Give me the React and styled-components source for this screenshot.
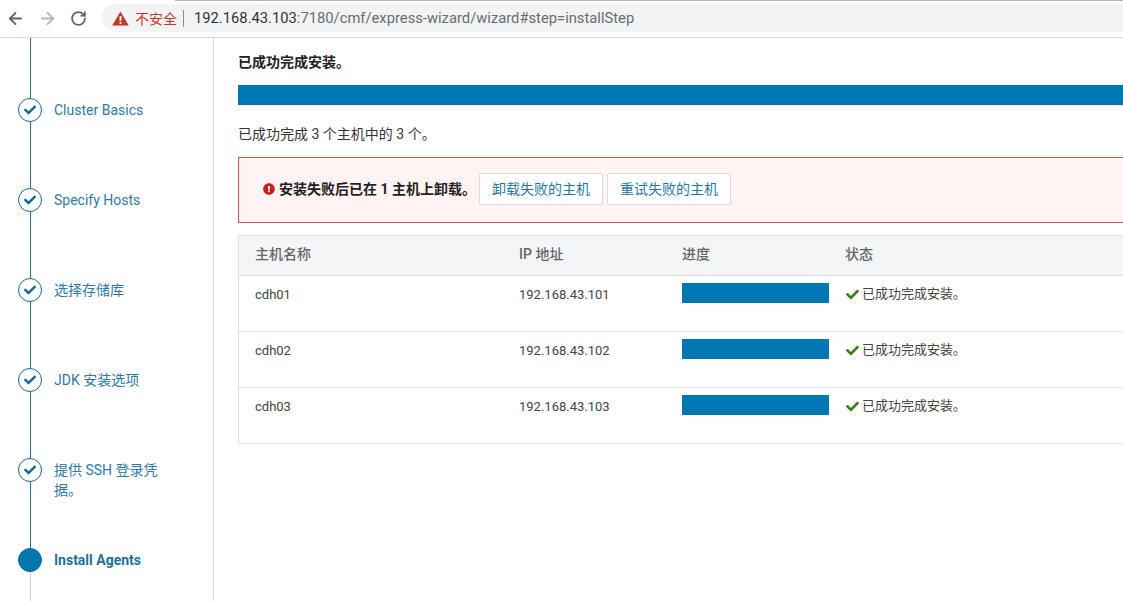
import React from 'react'
import styled, { createGlobalStyle } from 'styled-components'
import { ArrowLeft, ArrowRight, RotateCw } from 'lucide-react'
import { FaCheck, FaExclamationCircle } from 'react-icons/fa'

const BLUE = '#0077b0'

const Global = createGlobalStyle`
  html, body { margin: 0; padding: 0; background: #fff; }
  body {
    font-family: Roboto, "Noto Sans CJK SC", sans-serif;
    font-size: 14px;
    color: #333;
  }
`

const Page = styled.div`
  width: 1123px;
  height: 601px;
  overflow: hidden;
  display: flex;
  flex-direction: column;
`

const Toolbar = styled.div`
  height: 37px;
  flex-shrink: 0;
  border-bottom: 1px solid #d8d8d8;
  display: flex;
  align-items: center;
  padding-left: 6px;
  background: linear-gradient(to right, #fff 175px, #b4b4b4 175px) top / 100% 1px no-repeat #fff;
`

const NavButton = styled.span`
  width: 32px;
  height: 20px;
  flex-shrink: 0;
  display: flex;
  align-items: center;
  color: ${props => props.$off ? '#b0b3b6' : '#5f6368'};
`

const Omnibox = styled.div`
  width: 1040px;
  height: 28px;
  margin-top: -1px;
  flex-shrink: 0;
  border-radius: 14px;
  background: #f1f3f4;
  display: flex;
  align-items: center;
  padding-left: 10px;
`

const Insecure = styled.span`
  color: #c5392c;
  font-size: 14px;
  margin-left: 6px;
`

const Divider = styled.span`
  width: 1px;
  height: 17px;
  background: #8a8d90;
  margin: 0 10px 0 6px;
`

const Url = styled.span`
  font-size: 14.75px;
  color: #6a6d70;
  b { font-weight: 400; color: #303336; }
`

const Body = styled.div`
  flex: 1;
  display: flex;
  min-height: 0;
`

const Sidebar = styled.nav`
  width: 214px;
  box-sizing: border-box;
  flex-shrink: 0;
  border-right: 1px solid #d9d9d9;
  padding-left: 18px;
  display: flex;
  flex-direction: column;
`

const LeadLine = styled.div`
  width: 1px;
  height: 60px;
  margin-left: 12px;
  background: #1c76a8;
  flex-shrink: 0;
`

const Step = styled.div`
  height: 90px;
  flex-shrink: 0;
  display: flex;
  gap: 12px;
`

const Rail = styled.div`
  width: 24px;
  display: flex;
  flex-direction: column;
  align-items: center;
`

const Bullet = styled.span`
  width: 24px;
  height: 24px;
  flex-shrink: 0;
  box-sizing: border-box;
  border-radius: 50%;
  border: 1px solid #14689c;
  background: ${props => props.$active ? BLUE : '#fff'};
  color: #14689c;
  display: flex;
  align-items: center;
  justify-content: center;
  font-size: 12px;
`

const Connector = styled.span`
  flex: 1;
  width: 1px;
  background: ${props => props.$pending ? '#cfcfcf' : '#1c76a8'};
`

const StepLabel = styled.span`
  width: 112px;
  margin-top: 2px;
  line-height: 20px;
  font-size: 14px;
  font-weight: ${props => props.$active ? 700 : 400};
  color: ${props => props.$active ? '#1f6f9f' : '#2f7aa5'};
`

const Main = styled.main`
  width: 1000px;
  flex-shrink: 0;
  padding: 0 0 0 24px;
`

const Heading = styled.div`
  height: 47px;
  padding-top: 14px;
  box-sizing: border-box;
  line-height: 20px;
  font-weight: 700;
  color: #222;
`

const Progress = styled.div`
  height: 20px;
  background: ${BLUE};
`

const Summary = styled.div`
  margin-top: 19px;
  line-height: 20px;
  color: #333;
`

const Alert = styled.div`
  margin-top: 13px;
  height: 66px;
  box-sizing: border-box;
  border: 1px solid #d9534f;
  background: #fff3f3;
  padding: 0 0 3px 24px;
  display: flex;
  align-items: center;
`

const AlertIcon = styled.span`
  display: flex;
  color: #c9211e;
  font-size: 12px;
  margin-right: 4px;
`

const AlertText = styled.span`
  font-weight: 700;
  color: #222;
  margin: -2px 3px 0 0;
`

const Button = styled.button`
  height: 32px;
  width: 124px;
  margin-right: 4px;
  padding: 0 0 2px;
  border: 1px solid #d9dcdf;
  border-radius: 2px;
  background: #fff;
  font: inherit;
  color: #1f78a8;
`

const Table = styled.div`
  margin-top: 12px;
  border: 1px solid #e0e0e0;
  border-right: 0;
  border-bottom: 0;
`

const Row = styled.div`
  display: grid;
  grid-template-columns: 264px 163px 163px 1fr;
  padding-left: 16px;
  box-sizing: border-box;
  height: ${props => props.$head ? 40 : 56}px;
  border-bottom: 1px solid #e0e0e0;
  background: ${props => props.$head ? '#f4f5f6' : '#fff'};
  font-size: 13px;
`

const HeadCell = styled.div`
  line-height: 37px;
  font-size: 14px;
  font-weight: 500;
  color: #666;
`

const Cell = styled.div`
  padding-top: 9px;
  line-height: 20px;
  color: #444;
`

const BarCell = styled.div`
  padding-top: 7px;
`

const RowBar = styled.div`
  width: 147px;
  height: 20px;
  background: ${BLUE};
`

const Status = styled.div`
  padding-top: 8px;
  height: 20px;
  line-height: 20px;
  display: flex;
  align-items: center;
  gap: 4px;
  color: #444;
  svg { color: #3f7d1f; font-size: 13px; margin-left: 1px; margin-right: -1px; }
`

const steps = [
  { label: 'Cluster Basics' },
  { label: 'Specify Hosts' },
  { label: '选择存储库' },
  { label: 'JDK 安装选项' },
  { label: '提供 SSH 登录凭据。' },
  { label: 'Install Agents', active: true },
]

const hosts = [
  { name: 'cdh01', ip: '192.168.43.101' },
  { name: 'cdh02', ip: '192.168.43.102' },
  { name: 'cdh03', ip: '192.168.43.103' },
]

const WarnTriangle = () => (
  <svg width="17" height="15" viewBox="0 0 17 15">
    <path d="M8.5 0.5 L16.8 14.6 H0.2 Z" fill="#c5392c" />
    <rect x="7.6" y="5" width="1.8" height="5" fill="#fff" />
    <rect x="7.6" y="11" width="1.8" height="1.8" fill="#fff" />
  </svg>
)

const App = () => (
  <Page>
    <Global />
    <Toolbar>
      <NavButton><ArrowLeft size={19} strokeWidth={2.3} /></NavButton>
      <NavButton $off><ArrowRight size={19} strokeWidth={2.3} /></NavButton>
      <NavButton><RotateCw size={17} strokeWidth={2.5} /></NavButton>
      <Omnibox>
        <WarnTriangle />
        <Insecure>不安全</Insecure>
        <Divider />
        <Url><b>192.168.43.103</b>:7180/cmf/express-wizard/wizard#step=installStep</Url>
      </Omnibox>
    </Toolbar>
    <Body>
      <Sidebar>
        <LeadLine />
        {steps.map(step => (
          <Step key={step.label}>
            <Rail>
              <Bullet $active={step.active}>{!step.active && <FaCheck />}</Bullet>
              <Connector $pending={step.active} />
            </Rail>
            <StepLabel $active={step.active}>{step.label}</StepLabel>
          </Step>
        ))}
      </Sidebar>
      <Main>
        <Heading>已成功完成安装。</Heading>
        <Progress />
        <Summary>已成功完成 3 个主机中的 3 个。</Summary>
        <Alert>
          <AlertIcon><FaExclamationCircle /></AlertIcon>
          <AlertText>安装失败后已在 1 主机上卸载。</AlertText>
          <Button>卸载失败的主机</Button>
          <Button>重试失败的主机</Button>
        </Alert>
        <Table>
          <Row $head>
            <HeadCell>主机名称</HeadCell>
            <HeadCell>IP 地址</HeadCell>
            <HeadCell>进度</HeadCell>
            <HeadCell>状态</HeadCell>
          </Row>
          {hosts.map(host => (
            <Row key={host.name}>
              <Cell>{host.name}</Cell>
              <Cell>{host.ip}</Cell>
              <BarCell><RowBar /></BarCell>
              <Status><FaCheck />已成功完成安装。</Status>
            </Row>
          ))}
        </Table>
      </Main>
    </Body>
  </Page>
)

export default App
